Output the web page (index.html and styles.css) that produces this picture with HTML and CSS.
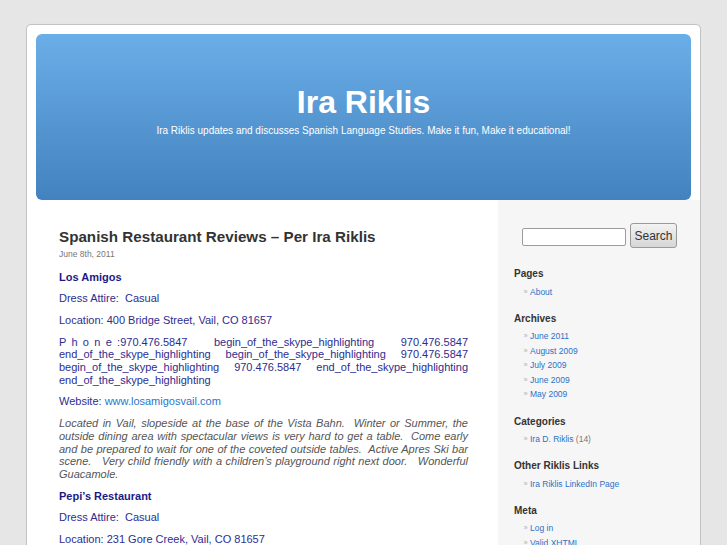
FILE: index.html
```html
<!DOCTYPE html>
<html>
<head>
<meta charset="utf-8">
<title>Ira Riklis</title>
<link rel="stylesheet" href="styles.css">
</head>
<body>
<div class="page">
  <header class="header">
    <h1 class="site-title">Ira Riklis</h1>
    <div class="tagline">Ira Riklis updates and discusses Spanish Language Studies. Make it fun, Make it educational!</div>
  </header>
  <div class="main">
    <div class="content">
      <h2 class="post-title">Spanish Restaurant Reviews – Per Ira Riklis</h2>
      <div class="post-date">June 8th, 2011</div>
      <p><strong>Los Amigos</strong></p>
      <p>Dress Attire:&nbsp; Casual</p>
      <p>Location: 400 Bridge Street, Vail, CO 81657</p>
      <p class="just">P h o n e :970.476.5847 &nbsp; &nbsp; begin_of_the_skype_highlighting &nbsp; &nbsp; 970.476.5847 end_of_the_skype_highlighting begin_of_the_skype_highlighting 970.476.5847 begin_of_the_skype_highlighting 970.476.5847 end_of_the_skype_highlighting end_of_the_skype_highlighting</p>
      <p>Website: <a class="link" href="#">www.losamigosvail.com</a></p>
      <p class="just desc">Located in Vail, slopeside at the base of the Vista Bahn.&nbsp; Winter or Summer, the outside dining area with spectacular views is very hard to get a table.&nbsp; Come early and be prepared to wait for one of the coveted outside tables.&nbsp; Active Apres Ski bar scene.&nbsp;&nbsp; Very child friendly with a children’s playground right next door.&nbsp;&nbsp; Wonderful Guacamole.</p>
      <p><strong>Pepi’s Restaurant</strong></p>
      <p>Dress Attire:&nbsp; Casual</p>
      <p>Location: 231 Gore Creek, Vail, CO 81657</p>
    </div>
    <aside class="sidebar">
      <form class="search">
        <input class="search-input" type="text">
        <button class="search-btn" type="button">Search</button>
      </form>
      <h3 class="widget-title">Pages</h3>
      <ul class="widget-list">
        <li><a href="#">About</a></li>
      </ul>
      <h3 class="widget-title">Archives</h3>
      <ul class="widget-list">
        <li><a href="#">June 2011</a></li>
        <li><a href="#">August 2009</a></li>
        <li><a href="#">July 2009</a></li>
        <li><a href="#">June 2009</a></li>
        <li><a href="#">May 2009</a></li>
      </ul>
      <h3 class="widget-title">Categories</h3>
      <ul class="widget-list">
        <li><a href="#">Ira D. Riklis</a> <span class="count">(14)</span></li>
      </ul>
      <h3 class="widget-title">Other Riklis Links</h3>
      <ul class="widget-list">
        <li><a href="#">Ira Riklis LinkedIn Page</a></li>
      </ul>
      <h3 class="widget-title">Meta</h3>
      <ul class="widget-list">
        <li><a href="#">Log in</a></li>
        <li><a href="#">Valid XHTML</a></li>
        <li><a href="#">XFN</a></li>
        <li><a href="#">WordPress</a></li>
      </ul>
    </aside>
  </div>
</div>
</body>
</html>
```

FILE: styles.css
```css
html, body {
  margin: 0;
  padding: 0;
}
body {
  background: #e6e6e6;
  font-family: "Liberation Sans", Arial, sans-serif;
  padding-top: 24px;
  overflow: hidden;
}
.page {
  margin-left: 26px;
  width: 673px;
  background: #ffffff;
  border: 1px solid #c3c3c3;
  border-radius: 5px;
  box-shadow: 0 0 1px #d8d8d8;
  padding-top: 9px;
}
.header {
  margin: 0 9px;
  height: 166px;
  border-radius: 6px;
  background: linear-gradient(#6aaee8, #4382be);
  box-sizing: border-box;
  padding-top: 50px;
  text-align: center;
  color: #ffffff;
}
.site-title {
  margin: 0;
  font-size: 32px;
  line-height: 36px;
  font-weight: bold;
}
.tagline {
  margin-top: 5px;
  font-size: 10px;
  line-height: 12px;
}
.main {
  display: flex;
  min-height: 420px;
}
.content {
  width: 471px;
  box-sizing: border-box;
  padding: 28px 30px 40px 32px;
  background: #ffffff;
}
.post-title {
  margin: 0;
  font-size: 15.2px;
  line-height: 18px;
  font-weight: bold;
  color: #333333;
}
.post-date {
  margin-top: 2.5px;
  font-size: 8.5px;
  line-height: 11px;
  color: #777777;
}
.content p {
  margin: 0 0 9px;
  font-size: 11px;
  line-height: 12.7px;
  color: #2d2d8f;
}
.content p:first-of-type {
  margin-top: 11px;
}
.content strong {
  color: #1b1b85;
}
.just {
  text-align: justify;
}
.content p.desc {
  font-style: italic;
  color: #555555;
}
.link {
  color: #2a76cc;
  text-decoration: none;
}
.sidebar {
  flex: 1;
  background: #f6f6f6;
  padding: 23px 10px 20px 16px;
}
.search {
  margin: 0 0 20px 8px;
  display: flex;
  align-items: center;
  gap: 4px;
}
.search-input {
  width: 104px;
  height: 18px;
  box-sizing: border-box;
  border: 1px solid #9c9c9c;
  border-radius: 2px;
  background: #ffffff;
  margin: 0;
  padding: 0;
  margin-top: 3px;
}
.search-btn {
  width: 47px;
  height: 25px;
  box-sizing: border-box;
  border: 1px solid #9a9a9a;
  border-radius: 3px;
  background: linear-gradient(#f3f3f3, #d6d6d6);
  font-family: "Liberation Sans", Arial, sans-serif;
  font-size: 12px;
  color: #333333;
  padding: 0;
  margin: 0;
}
.widget-title {
  margin: 0;
  font-size: 10px;
  line-height: 12px;
  font-weight: bold;
  color: #333333;
}
.widget-list {
  list-style: none;
  margin: 4.5px 0 13.5px;
  padding-left: 9px;
}
.widget-list li {
  font-size: 8.5px;
  line-height: 14.6px;
  height: 14.6px;
  color: #777777;
}
.widget-list li::before {
  content: "\00BB";
  color: #aaaaaa;
  font-size: 8.5px;
  line-height: 14.6px;
  display: inline-block;
  width: 7px;
  transform: scale(0.8);
}
.widget-list a {
  color: #2a72c8;
  text-decoration: none;
}
.count {
  color: #777777;
}
```
